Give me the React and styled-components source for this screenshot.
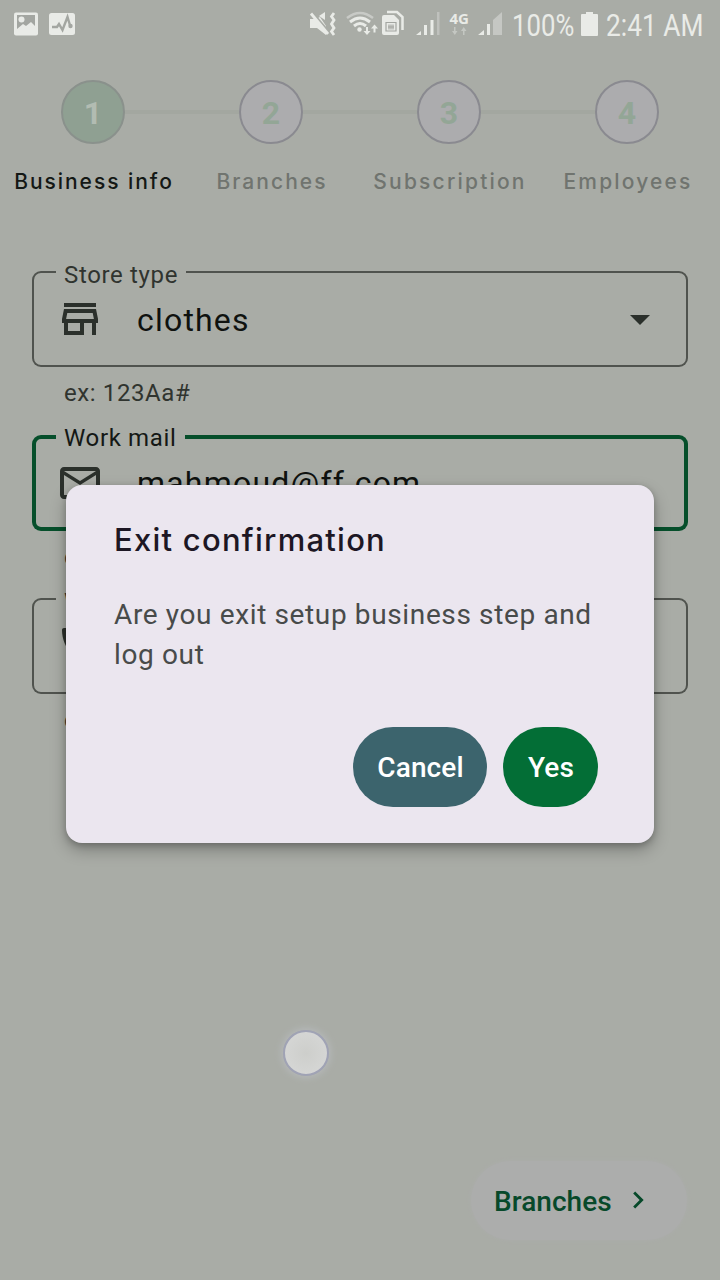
import React from "react";
import styled, { createGlobalStyle } from "styled-components";
import { MdOutlineStore, MdMailOutline, MdPhone, MdArrowDropDown, MdChevronRight } from "react-icons/md";

const GlobalStyle = createGlobalStyle`
  * { box-sizing: border-box; }
  body { margin: 0; background: #a9aca6; font-family: Roboto, "Liberation Sans", sans-serif; }
`;

const Screen = styled.div`
  position: relative;
  width: 720px;
  height: 1280px;
  overflow: hidden;
  display: flex;
  flex-direction: column;
  background: #a9aca6;
`;

const StatusBar = styled.header`
  height: 48px;
  flex: none;
  display: flex;
  justify-content: space-between;
  padding: 0 17px 0 14px;
  color: #e9ebe7;
`;

const StatusGroup = styled.div`
  display: flex;
  align-items: center;
  svg { display: block; flex: none; }
`;

const StatusText = styled.span`
  width: ${(p) => p.$width}px;
  margin-left: ${(p) => p.$gap}px;
  font-size: 31px;
  line-height: 48px;
  padding-top: 3px;
  white-space: nowrap;
  transform: scaleX(${(p) => p.$stretch});
  transform-origin: left;
`;

const PulseBadge = styled.svg`
  margin-left: 11px;
`;

const Battery = styled.svg`
  margin-left: 7px;
`;

const Rail = styled.div`
  display: flex;
  align-items: center;
  padding: 32px 61px 0 61px;
`;

const StepCircle = styled.div`
  width: 64px;
  height: 64px;
  flex: none;
  display: flex;
  align-items: center;
  justify-content: center;
  border: 2px solid ${(p) => (p.$active ? "#8a918c" : "#8a8a90")};
  border-radius: 50%;
  background: ${(p) => (p.$active ? "#8fa092" : "#acacae")};
  color: ${(p) => (p.$active ? "#b2bcb2" : "#93a696")};
  font-size: 32px;
  font-weight: 700;
  padding-top: 1px;
`;

const Connector = styled.div`
  flex: 1;
  height: 4px;
  background: #a3a7a0;
`;

const StepLabels = styled.div`
  display: grid;
  grid-template-columns: repeat(4, 178px);
  padding: 22px 0 0 5px;
`;

const StepLabel = styled.div`
  height: 32px;
  line-height: 32px;
  text-align: center;
  white-space: nowrap;
  font-family: Inter, sans-serif;
  font-size: 21px;
  font-weight: 500;
  letter-spacing: ${(p) => p.$spacing}px;
  color: ${(p) => (p.$active ? "#141815" : "#70746f")};
`;

const Form = styled.main`
  padding: 73px 32px 0;
  display: flex;
  flex-direction: column;
`;

const FieldGroup = styled.div`
  height: 163.5px;
`;

const FieldBox = styled.div`
  position: relative;
  display: flex;
  align-items: center;
  height: 96px;
  padding: 0 24px;
  border-radius: 9px;
  box-shadow: inset 0 0 0 ${(p) => (p.$focused ? "4px #064f2b" : "2px #50534e")};
  color: #2b302b;
  > svg { flex: none; }
`;

const FieldLabel = styled.label`
  position: absolute;
  left: 24px;
  top: ${(p) => (p.$focused ? -12 : -11)}px;
  width: ${(p) => p.$width}px;
  padding-left: 8px;
  line-height: 30px;
  font-size: 24px;
  letter-spacing: 0.65px;
  white-space: nowrap;
  background: #a9aca6;
  color: ${(p) => (p.$focused ? "#141815" : "#30342f")};
`;

const FieldValue = styled.span`
  flex: 1;
  margin-left: 33px;
  padding-top: ${(p) => (p.$focused ? 0 : 2)}px;
  font-size: 32px;
  letter-spacing: 1.2px;
  color: #0f120f;
`;

const Helper = styled.div`
  padding: 11px 32px 0;
  line-height: 30px;
  font-size: 24px;
  letter-spacing: 0.6px;
  color: #30342f;
`;

const Footer = styled.footer`
  margin-top: auto;
  display: flex;
  justify-content: flex-end;
  padding: 0 33px 40px;
`;

const NextButton = styled.button`
  display: flex;
  align-items: center;
  width: 216px;
  height: 79px;
  border: 0;
  border-radius: 40px;
  padding: 1px 0 0 23px;
  background: #acadac;
  box-shadow: 0 0 4px #acadac;
  color: #07492a;
  font: 500 28px Roboto, sans-serif;
  letter-spacing: 0.05px;
  svg { margin: -3px 0 0 9px; }
`;

const TouchPoint = styled.div`
  position: absolute;
  left: 283px;
  top: 1030px;
  width: 46px;
  height: 46px;
  border-radius: 50%;
  border: 2px solid #a0a3b5;
  background: radial-gradient(circle, #cdcecb, #d8d9d8);
  box-shadow: 0 0 7px 2px #b5b8b9;
`;

const ModalLayer = styled.div`
  position: absolute;
  inset: 48px 0 0;
  display: flex;
  align-items: center;
  justify-content: center;
`;

const Dialog = styled.section`
  width: 588px;
  height: 358px;
  padding: 35px 56px 36px 48px;
  display: flex;
  flex-direction: column;
  border-radius: 16px;
  background: #ebe6ef;
  box-shadow: 0 7px 16px rgba(0, 0, 0, 0.27), 0 2px 6px rgba(0, 0, 0, 0.2);
`;

const DialogTitle = styled.h1`
  margin: 0;
  font: 500 31px/40px Inter, sans-serif;
  letter-spacing: 1.25px;
  color: #1d1724;
`;

const DialogText = styled.p`
  margin: 35px 0 0;
  font-size: 28px;
  line-height: 40px;
  letter-spacing: 0.63px;
  white-space: nowrap;
  color: #484b4a;
`;

const DialogActions = styled.div`
  margin-top: auto;
  display: flex;
  justify-content: flex-end;
  gap: 16px;
`;

const DialogButton = styled.button`
  width: ${(p) => p.$width}px;
  height: 80px;
  border: 0;
  border-radius: 40px;
  padding: 0 0 0 1px;
  background: ${(p) => p.$color};
  color: #fff;
  font: 500 28px Roboto, sans-serif;
  letter-spacing: 0.1px;
`;

const PictureIcon = () => (
  <svg width="24" height="24" viewBox="0 0 24 24">
    <rect width="24" height="23" y=".5" rx="2" fill="#e9ebe7" />
    <path d="M3 3h18v11l-4-4-5 4-3-2-6 5z" fill="#a3a6a1" />
    <circle cx="7.5" cy="7.5" r="3" fill="#e9ebe7" />
  </svg>
);

const PulseIcon = () => (
  <PulseBadge width="26" height="24" viewBox="0 0 26 24">
    <rect width="26" height="22" y="1" rx="2.5" fill="#e9ebe7" />
    <path d="M3 15h5l2-3 3.500 6 5-13 3 10" fill="none" stroke="#a3a6a1" strokeWidth="2.400" />
    <circle cx="21.5" cy="14" r="2.200" fill="#a3a6a1" />
  </PulseBadge>
);

const SystemIcons = () => (
  <svg width="194" height="48" viewBox="309 0 194 48" fill="#e9ebe7">
    <path d="M310 19h6l4-2 6 9v9l-9-7h-7z" />
    <path d="M312 12l18 21" stroke="#a9aca6" strokeWidth="2" />
    <path d="M311 13.500l17 20.500" stroke="#e9ebe7" strokeWidth="2.800" />
    <path d="M319 16l6-4v8z" />
    <path d="M334 13l-2.500 3.500 2.500 3.500-2.500 4 2.500 4-2.500 3.500 2.500 3.500" fill="none" stroke="#e9ebe7" strokeWidth="2.800" />
    <g fill="none" strokeWidth="2.500">
      <path d="M347 18q13-10 26 0" stroke="#c8cac6" />
      <path d="M350 22q10-8 20 0M354 26q6-5 12 0" stroke="#e9ebe7" strokeWidth="3" />
    </g>
    <circle cx="359.500" cy="29.500" r="2.200" />
    <path d="M366 27h2v4h2.500l-3.500 4-3.500-4h2.500zM373.500 32.500v-4H371l3.500-4 3.500 4h-2.500v4z" />
    <path d="M387 12h10l5.500 5v13" fill="none" stroke="#e9ebe7" strokeWidth="2.500" />
    <path d="M384 15h10l5 5v13q0 2-2 2h-13q-2 0-2-2V17q0-2 2-2z" />
    <path d="M386 22.500h10v8.500h-10zM389 24.500v5M393 24.500v5M391 24.500v5M388 27h6" fill="none" stroke="#a3a6a1" strokeWidth="1.200" />
    <path d="M416 35l5-4v4zM424 25h3v10h-3zM430.500 20h3v15h-3z" />
    <path d="M437 12h2.500v23H437z" fill="#bfc1bd" />
    <text x="449.500" y="23.500" fontFamily="Open Sans, sans-serif" fontSize="15" fontWeight="700" textLength="19.500" lengthAdjust="spacingAndGlyphs">4G</text>
    <path d="M454 27h1.500v4h2l-2.700 4-2.800-4h2zM463 35v-4h-2l2.700-4 2.800 4h-2v4z" fill="#c4c7c2" />
    <path d="M478 35l6-5v5zM487 24h3v11h-3z" />
    <path d="M493 20l9-8v23h-9z" fill="#c5c7c3" />
  </svg>
);

const BatteryIcon = () => (
  <Battery width="17" height="26" viewBox="0 0 17 26">
    <path d="M5 1h7v2h4q1 0 1 1v20q0 1-1 1H1q-1 0-1-1V4q0-1 1-1h4z" fill="#e9ebe7" />
  </Battery>
);

const steps = [
  { label: "Business info", spacing: 1.95 },
  { label: "Branches", spacing: 2.05 },
  { label: "Subscription", spacing: 2.2 },
  { label: "Employees", spacing: 2.15 },
];

const Field = ({ label, labelWidth, icon: Icon, value, focused, select }) => (
  <FieldGroup>
    <FieldBox $focused={focused}>
      <FieldLabel $width={labelWidth} $focused={focused}>{label}</FieldLabel>
      <Icon size={48} />
      <FieldValue $focused={focused}>{value}</FieldValue>
      {select && <MdArrowDropDown size={48} />}
    </FieldBox>
    <Helper>ex: 123Aa#</Helper>
  </FieldGroup>
);

export default function App() {
  return (
    <Screen>
      <GlobalStyle />
      <StatusBar>
        <StatusGroup>
          <PictureIcon />
          <PulseIcon />
        </StatusGroup>
        <StatusGroup>
          <SystemIcons />
          <StatusText $width={62} $gap={9} $stretch={0.83}>100%</StatusText>
          <BatteryIcon />
          <StatusText $width={97} $gap={8} $stretch={0.85}>2:41 AM</StatusText>
        </StatusGroup>
      </StatusBar>
      <Rail>
        {steps.map((step, i) => (
          <React.Fragment key={step.label}>
            {i > 0 && <Connector />}
            <StepCircle $active={i === 0}>{i + 1}</StepCircle>
          </React.Fragment>
        ))}
      </Rail>
      <StepLabels>
        {steps.map((step, i) => (
          <StepLabel key={step.label} $active={i === 0} $spacing={step.spacing}>{step.label}</StepLabel>
        ))}
      </StepLabels>
      <Form>
        <Field label="Store type" labelWidth={130} icon={MdOutlineStore} value="clothes" select />
        <Field label="Work mail" labelWidth={129} icon={MdMailOutline} value="mahmoud@ff.com" focused />
        <Field label="Work phone" labelWidth={148} icon={MdPhone} value="" />
      </Form>
      <Footer>
        <NextButton>
          Branches
          <MdChevronRight size={34} />
        </NextButton>
      </Footer>
      <TouchPoint />
      <ModalLayer>
        <Dialog role="dialog">
          <DialogTitle>Exit confirmation</DialogTitle>
          <DialogText>Are you exit setup business step and<br />log out</DialogText>
          <DialogActions>
            <DialogButton $width={134} $color="#3c646d">Cancel</DialogButton>
            <DialogButton $width={95} $color="#036e36">Yes</DialogButton>
          </DialogActions>
        </Dialog>
      </ModalLayer>
    </Screen>
  );
}
